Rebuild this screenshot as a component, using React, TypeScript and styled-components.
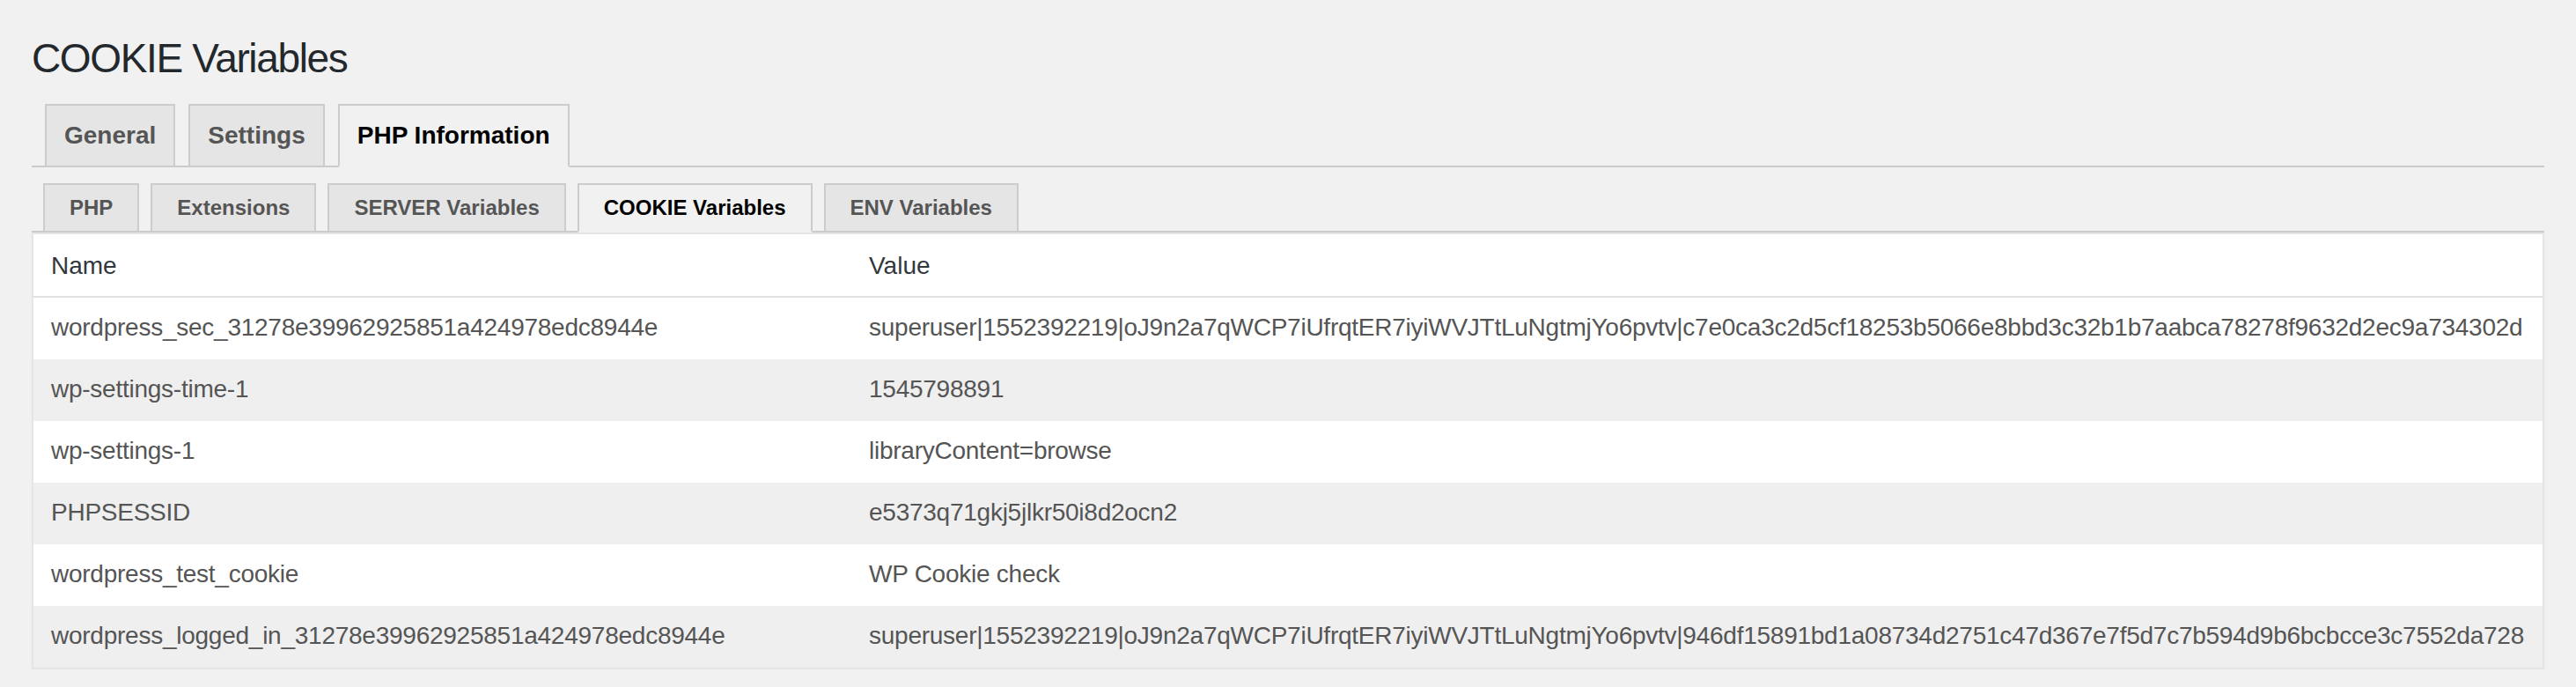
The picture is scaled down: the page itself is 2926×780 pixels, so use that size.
import styled, { createGlobalStyle } from "styled-components";

// PHP Information > COOKIE Variables admin screen (rendered at 2x density).

const GlobalStyle = createGlobalStyle`
  html, body {
    margin: 0;
    padding: 0;
    background: #f1f1f1;
  }
  body {
    font-family: "Liberation Sans", Arial, sans-serif;
    color: #444;
  }
`;

interface Cookie {
  name: string;
  value: string;
}

const cookies: Cookie[] = [
  {
    name: "wordpress_sec_31278e39962925851a424978edc8944e",
    value:
      "superuser|1552392219|oJ9n2a7qWCP7iUfrqtER7iyiWVJTtLuNgtmjYo6pvtv|c7e0ca3c2d5cf18253b5066e8bbd3c32b1b7aabca78278f9632d2ec9a734302d",
  },
  { name: "wp-settings-time-1", value: "1545798891" },
  { name: "wp-settings-1", value: "libraryContent=browse" },
  { name: "PHPSESSID", value: "e5373q71gkj5jlkr50i8d2ocn2" },
  { name: "wordpress_test_cookie", value: "WP Cookie check" },
  {
    name: "wordpress_logged_in_31278e39962925851a424978edc8944e",
    value:
      "superuser|1552392219|oJ9n2a7qWCP7iUfrqtER7iyiWVJTtLuNgtmjYo6pvtv|946df15891bd1a08734d2751c47d367e7f5d7c7b594d9b6bcbcce3c7552da728",
  },
];

const mainTabs = ["General", "Settings", "PHP Information"];
const subTabs = ["PHP", "Extensions", "SERVER Variables", "COOKIE Variables", "ENV Variables"];

export default function App() {
  return (
    <>
      <GlobalStyle />
      <Wrap>
        <Title>COOKIE Variables</Title>

        <TabBar>
          {mainTabs.map((t) => (
            <Tab key={t} $active={t === "PHP Information"}>
              {t}
            </Tab>
          ))}
        </TabBar>

        <SubTabBar>
          {subTabs.map((t) => (
            <SubTab key={t} $active={t === "COOKIE Variables"}>
              {t}
            </SubTab>
          ))}
        </SubTabBar>

        <Table>
          <thead>
            <tr>
              <HeadCell $first>Name</HeadCell>
              <HeadCell>Value</HeadCell>
            </tr>
          </thead>
          <tbody>
            {cookies.map((c, i) => (
              <Row key={c.name} $striped={i % 2 === 1}>
                <Cell>{c.name}</Cell>
                <Cell>{c.value}</Cell>
              </Row>
            ))}
          </tbody>
        </Table>
      </Wrap>
    </>
  );
}

const Wrap = styled.div`
  padding: 0 36px;
`;

const Title = styled.h1`
  margin: 36px 0 22px;
  font-size: 46px;
  line-height: 60px;
  font-weight: 400;
  letter-spacing: -1.35px;
  color: #23282d;
`;

const TabBar = styled.nav`
  display: flex;
  align-items: flex-end;
  border-bottom: 2px solid #ccc;
`;

const Tab = styled.a<{ $active?: boolean }>`
  display: block;
  margin-left: 15px;
  margin-bottom: ${({ $active }) => ($active ? "-2px" : "0")};
  padding: 10px 20px;
  border: 2px solid #ccc;
  border-bottom: ${({ $active }) => ($active ? "2px solid #f1f1f1" : "none")};
  background: ${({ $active }) => ($active ? "#f1f1f1" : "#e5e5e5")};
  color: ${({ $active }) => ($active ? "#000" : "#555")};
  font-size: 28px;
  line-height: 48px;
  font-weight: 700;
  white-space: nowrap;
  cursor: pointer;
`;

const SubTabBar = styled.nav`
  display: flex;
  align-items: flex-end;
  margin-top: 18px;
  border-bottom: 2px solid #ccc;
`;

const SubTab = styled.a<{ $active?: boolean }>`
  display: block;
  margin-left: 13px;
  margin-bottom: ${({ $active }) => ($active ? "-2px" : "0")};
  padding: 8px 28px;
  border: 2px solid #ccc;
  border-bottom: ${({ $active }) => ($active ? "2px solid #f1f1f1" : "none")};
  background: ${({ $active }) => ($active ? "#f1f1f1" : "#e5e5e5")};
  color: ${({ $active }) => ($active ? "#000" : "#555")};
  font-size: 24px;
  line-height: 36px;
  font-weight: 700;
  white-space: nowrap;
  cursor: pointer;
`;

const Table = styled.table`
  width: 100%;
  border-collapse: separate;
  border-spacing: 0;
  table-layout: fixed;
  background: #fff;
  border: 2px solid #e5e5e5;
  box-shadow: 0 2px 2px rgba(0, 0, 0, 0.04);
`;

const HeadCell = styled.th<{ $first?: boolean }>`
  box-sizing: border-box;
  width: ${({ $first }) => ($first ? "929px" : "auto")};
  padding: 20px 20px 18px;
  border-bottom: 2px solid #e1e1e1;
  text-align: left;
  font-size: 28px;
  line-height: 32px;
  font-weight: 400;
  color: #32373c;
`;

const Row = styled.tr<{ $striped?: boolean }>`
  background: ${({ $striped }) => ($striped ? "#efefef" : "#fff")};
`;

const Cell = styled.td`
  padding: 18px 20px 20px;
  font-size: 28px;
  line-height: 32px;
  letter-spacing: -0.25px;
  color: #555;
  white-space: nowrap;
  overflow: hidden;
`;
